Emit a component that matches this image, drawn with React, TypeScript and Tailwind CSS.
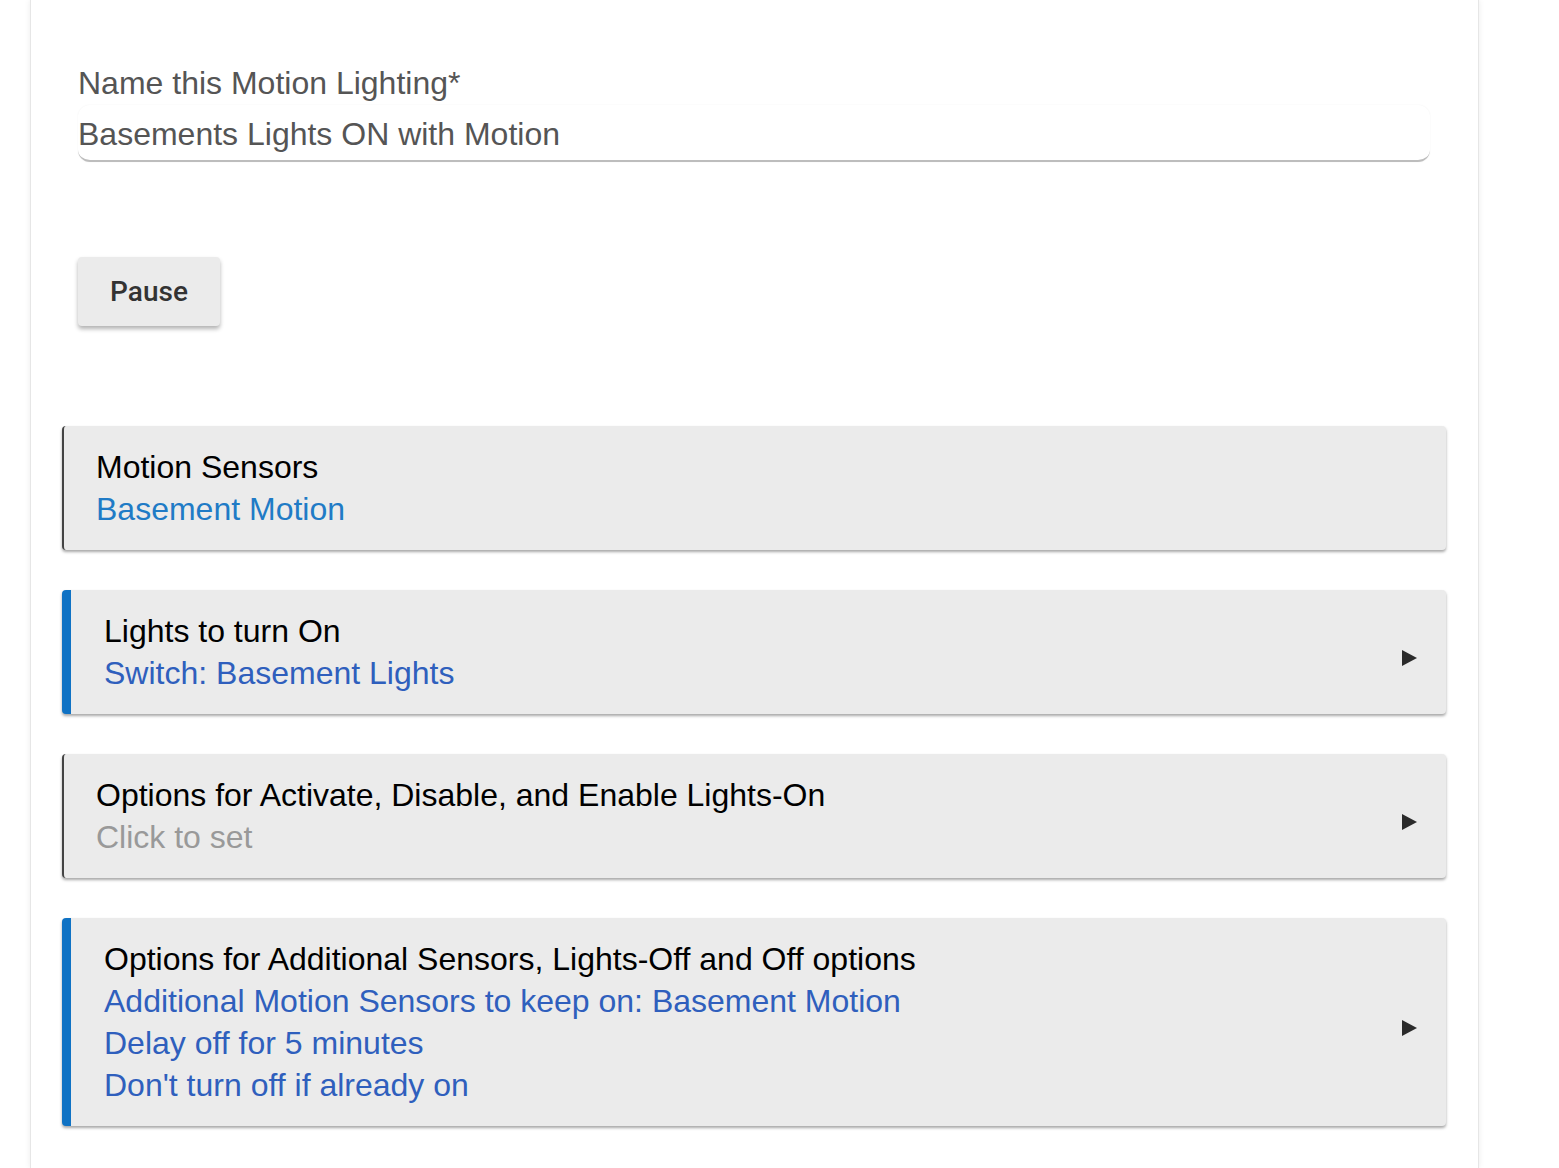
import React from 'react';

const FONT = '"Liberation Sans", Arial, Helvetica, sans-serif';

interface Card {
  title: string;
  lines: string[];
  tone: 'sky' | 'blue' | 'gray';
  accent: boolean;
  arrow: boolean;
}

const CARDS: Card[] = [
  { title: 'Motion Sensors', lines: ['Basement Motion'], tone: 'sky', accent: false, arrow: false },
  { title: 'Lights to turn On', lines: ['Switch: Basement Lights'], tone: 'blue', accent: true, arrow: true },
  {
    title: 'Options for Activate, Disable, and Enable Lights-On',
    lines: ['Click to set'],
    tone: 'gray',
    accent: false,
    arrow: true,
  },
  {
    title: 'Options for Additional Sensors, Lights-Off and Off options',
    lines: [
      'Additional Motion Sensors to keep on: Basement Motion',
      'Delay off for 5 minutes',
      "Don't turn off if already on",
    ],
    tone: 'blue',
    accent: true,
    arrow: true,
  },
];

function SectionCard({ card }: { card: Card }) {
  const toneClass =
    card.tone === 'sky' ? 'text-[#1f7bc6]' : card.tone === 'blue' ? 'text-[#2f5fbd]' : 'text-[#999999]';
  return (
    <div
      className={`flex items-center rounded-[4px] bg-[#ebebeb] py-5 pr-[29px] shadow-[0_2px_3px_rgba(0,0,0,0.35)] ${
        card.accent ? 'border-l-[9px] border-[#0f72c4] pl-[33px]' : 'border-l-2 border-[#444444] pl-[32px]'
      }`}
    >
      <div className="flex-1 text-[32px] leading-[42px]">
        <div className="text-black">{card.title}</div>
        {card.lines.map((l) => (
          <div key={l} className={toneClass}>
            {l}
          </div>
        ))}
      </div>
      {card.arrow && (
        <svg width="15" height="16" viewBox="0 0 15 16" className="mt-3 shrink-0">
          <path d="M0 0 L15 8 L0 16 Z" fill="#2b2b2b" />
        </svg>
      )}
    </div>
  );
}

export default function App() {
  return (
    <div className="min-h-[1168px] bg-white" style={{ fontFamily: FONT }}>
      <div className="ml-[30px] min-h-[1168px] w-[1449px] border-x border-[#e6e6e6] bg-white shadow-[0_0_6px_rgba(0,0,0,0.08)]">
        <div className="pl-[47px] pr-[48px] pt-[62px]">
          <div className="text-[32px] leading-[42px] text-[#555555]">Name this Motion Lighting*</div>
          <div className="mt-[1px] h-[57px] rounded-[12px] border-b-2 border-[#bdbdbd] bg-white pt-[8px] text-[32px] leading-[42px] text-[#555555] shadow-[0_0_2px_rgba(0,0,0,0.06)]">
            Basements Lights ON with Motion
          </div>
          <button
            type="button"
            className="mt-[95px] h-[69px] w-[142px] rounded-[4px] bg-[#ebebeb] text-[28px] font-medium text-[#333333] shadow-[0_3px_4px_rgba(0,0,0,0.3)]"
            style={{ fontFamily: 'Roboto, sans-serif' }}
          >
            Pause
          </button>
        </div>
        <div className="mt-[100px] flex flex-col gap-10 pb-10 pl-[31px] pr-[32px]">
          {CARDS.map((c) => (
            <SectionCard key={c.title} card={c} />
          ))}
        </div>
      </div>
    </div>
  );
}
